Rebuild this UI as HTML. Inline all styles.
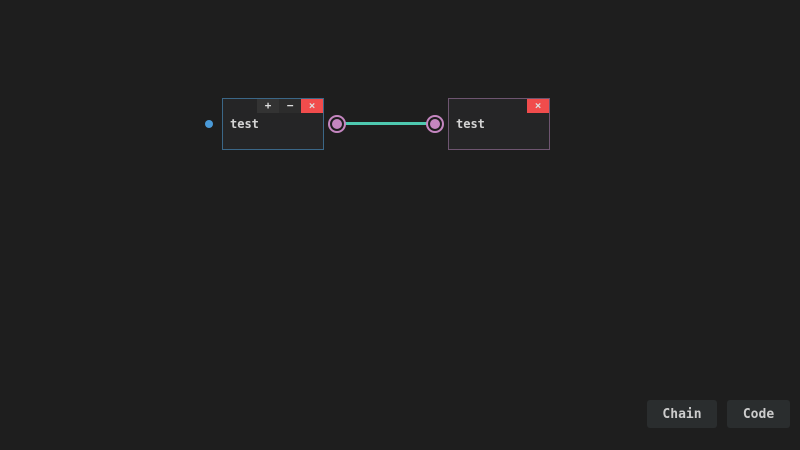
<!DOCTYPE html><html><head><style>
body{margin:0;width:800px;height:450px;background:#1e1e1e;position:relative;overflow:hidden;font-family:"DejaVu Sans Mono","Liberation Mono",monospace}
.n{position:absolute;box-sizing:border-box;background:#252526;width:102px;height:52px;top:98px}
.t{position:absolute;left:7px;top:18px;color:#d4d4d4;font-size:12px;font-weight:bold}
.b{position:absolute;top:0;width:22px;height:14px;color:#ddd;font-size:11px;text-align:center;line-height:14px;font-weight:bold}
.p{position:absolute;width:10px;height:10px;border-radius:50%;background:#c586c0;border:2px solid #1e1e1e;box-shadow:0 0 0 2px #c586c0;top:117px}
.btn{position:absolute;top:400px;height:28px;background:#2a2d2e;border-radius:3px;color:#ccc;font-size:13px;font-weight:bold;text-align:center;line-height:29px}
</style></head><body>
<div style="position:absolute;left:205px;top:120px;width:8px;height:8px;border-radius:50%;background:#4a9ad8"></div>
<div class="n" style="left:222px;border:1px solid #3b6787">
<div class="b" style="left:34px;background:#333">+</div><div class="b" style="left:56px;background:#2c2c2c">−</div><div class="b" style="left:78px;background:#f14c4c">×</div>
<div class="t">test</div></div>
<div class="n" style="left:448px;border:1px solid #6e5570">
<div class="b" style="left:78px;background:#f14c4c">×</div><div class="t">test</div></div>
<div style="position:absolute;left:344px;top:122px;width:84px;height:3px;background:#4ec9b0"></div>
<div class="p" style="left:330px"></div><div class="p" style="left:428px"></div>
<div class="btn" style="left:647px;width:70px">Chain</div>
<div class="btn" style="left:727px;width:63px">Code</div>
</body></html>
